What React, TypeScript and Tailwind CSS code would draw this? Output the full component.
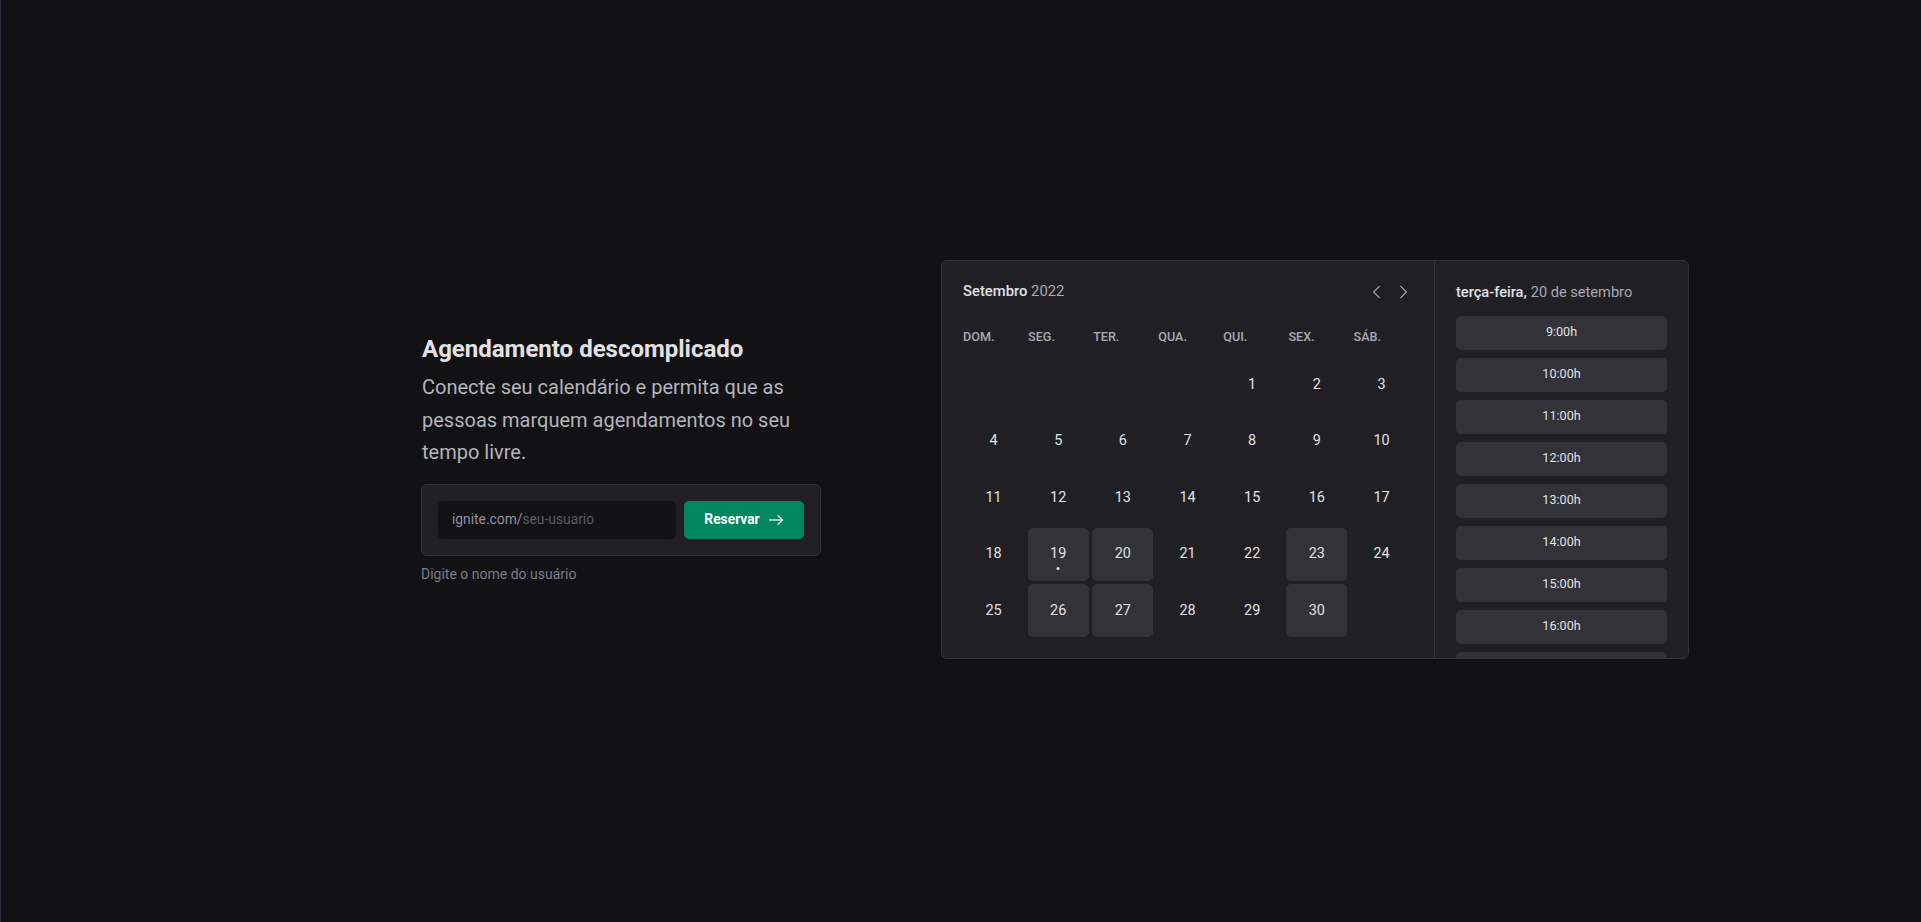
import React from 'react';

const weekDays = ['DOM.', 'SEG.', 'TER.', 'QUA.', 'QUI.', 'SEX.', 'SÁB.'];
const availableDays = [19, 20, 23, 26, 27, 30];
const hours = [9, 10, 11, 12, 13, 14, 15, 16, 17];

// leading blanks: 1 de setembro de 2022 caiu numa quinta
const cells: (number | null)[] = [null, null, null, null, ...Array.from({ length: 30 }, (_, i) => i + 1)];

const Caret: React.FC<{ dir: 'left' | 'right' }> = ({ dir }) => (
  <svg width="18" height="18" viewBox="0 0 256 256" fill="none" stroke="currentColor" strokeWidth="16" strokeLinecap="round" strokeLinejoin="round">
    {dir === 'left' ? <polyline points="160,208 80,128 160,48" /> : <polyline points="96,48 176,128 96,208" />}
  </svg>
);

const ArrowRight: React.FC = () => (
  <svg width="16" height="16" viewBox="0 0 16 16" fill="none" stroke="currentColor" strokeWidth="1.3" strokeLinecap="round" strokeLinejoin="round">
    <line x1="1.5" y1="8" x2="14.5" y2="8" />
    <polyline points="10,3.5 14.5,8 10,12.5" />
  </svg>
);

const App: React.FC = () => {
  return (
    <div className="h-[922px] bg-[#121214] border-l border-[#2d2f38] flex items-center pl-[420px] gap-[120px] pb-[4px] font-['Roboto',sans-serif] overflow-hidden">
      {/* hero */}
      <div className="w-[400px] flex flex-col">
        <h1 className="text-[24px] leading-[30px] font-bold text-[#e1e1e6] pl-[1px]">Agendamento descomplicado</h1>
        <p className="mt-[7px] text-[20px] leading-[32.5px] text-[#b4b4bc] pl-[1px]">
          Conecte seu calendário e permita que as pessoas marquem agendamentos no seu tempo livre.
        </p>

        <form className="mt-[15px] h-[72px] bg-[#202024] border border-[#323238] rounded-[6px] p-[16px] flex gap-[8px]" onSubmit={e => e.preventDefault()}>
          <div className="w-[238px] h-[38px] bg-[#121214] rounded-[5px] flex items-center pl-[14px] pr-[15px] text-[13.8px]">
            <span className="text-[#8f8fa0]">ignite.com/</span>
            <input
              className="flex-1 min-w-0 bg-transparent outline-none text-[#e1e1e6] placeholder:text-[#5b5b65]"
              placeholder="seu-usuario"
            />
          </div>
          <button className="w-[120px] h-[38px] bg-[#00875f] rounded-[5px] flex items-center justify-center gap-[8px] text-white text-[13.8px] font-bold">
            Reservar
            <span className="text-[#cfe9df]"><ArrowRight /></span>
          </button>
        </form>

        <span className="mt-[8px] text-[14px] leading-[20px] text-[#7c7c8a]">Digite o nome do usuário</span>
      </div>

      {/* calendar preview */}
      <div className="w-[748px] h-[399px] bg-[#202024] border border-[#323238] rounded-[6px] flex overflow-hidden">
        <div className="w-[492px] shrink-0 flex flex-col pl-[21px] pr-[22px] pt-[20px]">
          <div className="h-[22px] flex items-center justify-between">
            <span className="text-[14.8px] font-medium text-[#e1e1e6]">
              Setembro <span className="text-[#a9a9b2] font-normal">2022</span>
            </span>
            <div className="flex items-center gap-[8px] text-[#a9a9b2]">
              <Caret dir="left" />
              <Caret dir="right" />
            </div>
          </div>

          <div className="mt-[25px] w-[452px] grid grid-cols-7 gap-x-[3.6px] h-[18px]">
            {weekDays.map(d => (
              <span key={d} className="text-[12.6px] leading-[18px] font-medium text-[#a9a9b2]">{d}</span>
            ))}
          </div>

          <div className="mt-[12.5px] grid grid-cols-7 gap-[3.6px]">
            {cells.map((day, i) => {
              const enabled = day !== null && availableDays.includes(day);
              return (
                <div
                  key={i}
                  className={`relative h-[53px] rounded-[5px] flex items-center justify-center text-[14.4px] text-[#e1e1e6] ${enabled ? 'bg-[#323238]' : ''}`}
                >
                  {day}
                  {day === 19 && <span className="absolute left-1/2 -translate-x-1/2 top-[39px] w-[3px] h-[3px] rounded-full bg-[#e1e1e6]" />}
                </div>
              );
            })}
          </div>
        </div>

        <div className="flex-1 border-l border-[#323238] px-[21px] pt-[21px] overflow-hidden">
          <div className="h-[22px] flex items-center text-[14.6px] font-medium text-[#e1e1e6] whitespace-nowrap">
            terça-feira,<span className="ml-[4px] text-[#a9a9b2] font-normal">20 de setembro</span>
          </div>
          <div className="mt-[12px] flex flex-col gap-[8px]">
            {hours.map(h => (
              <button key={h} className="h-[34px] shrink-0 bg-[#323238] rounded-[5px] text-[12.6px] text-[#e1e1e6]">
                {h}:00h
              </button>
            ))}
          </div>
        </div>
      </div>
    </div>
  );
};

export default App;
